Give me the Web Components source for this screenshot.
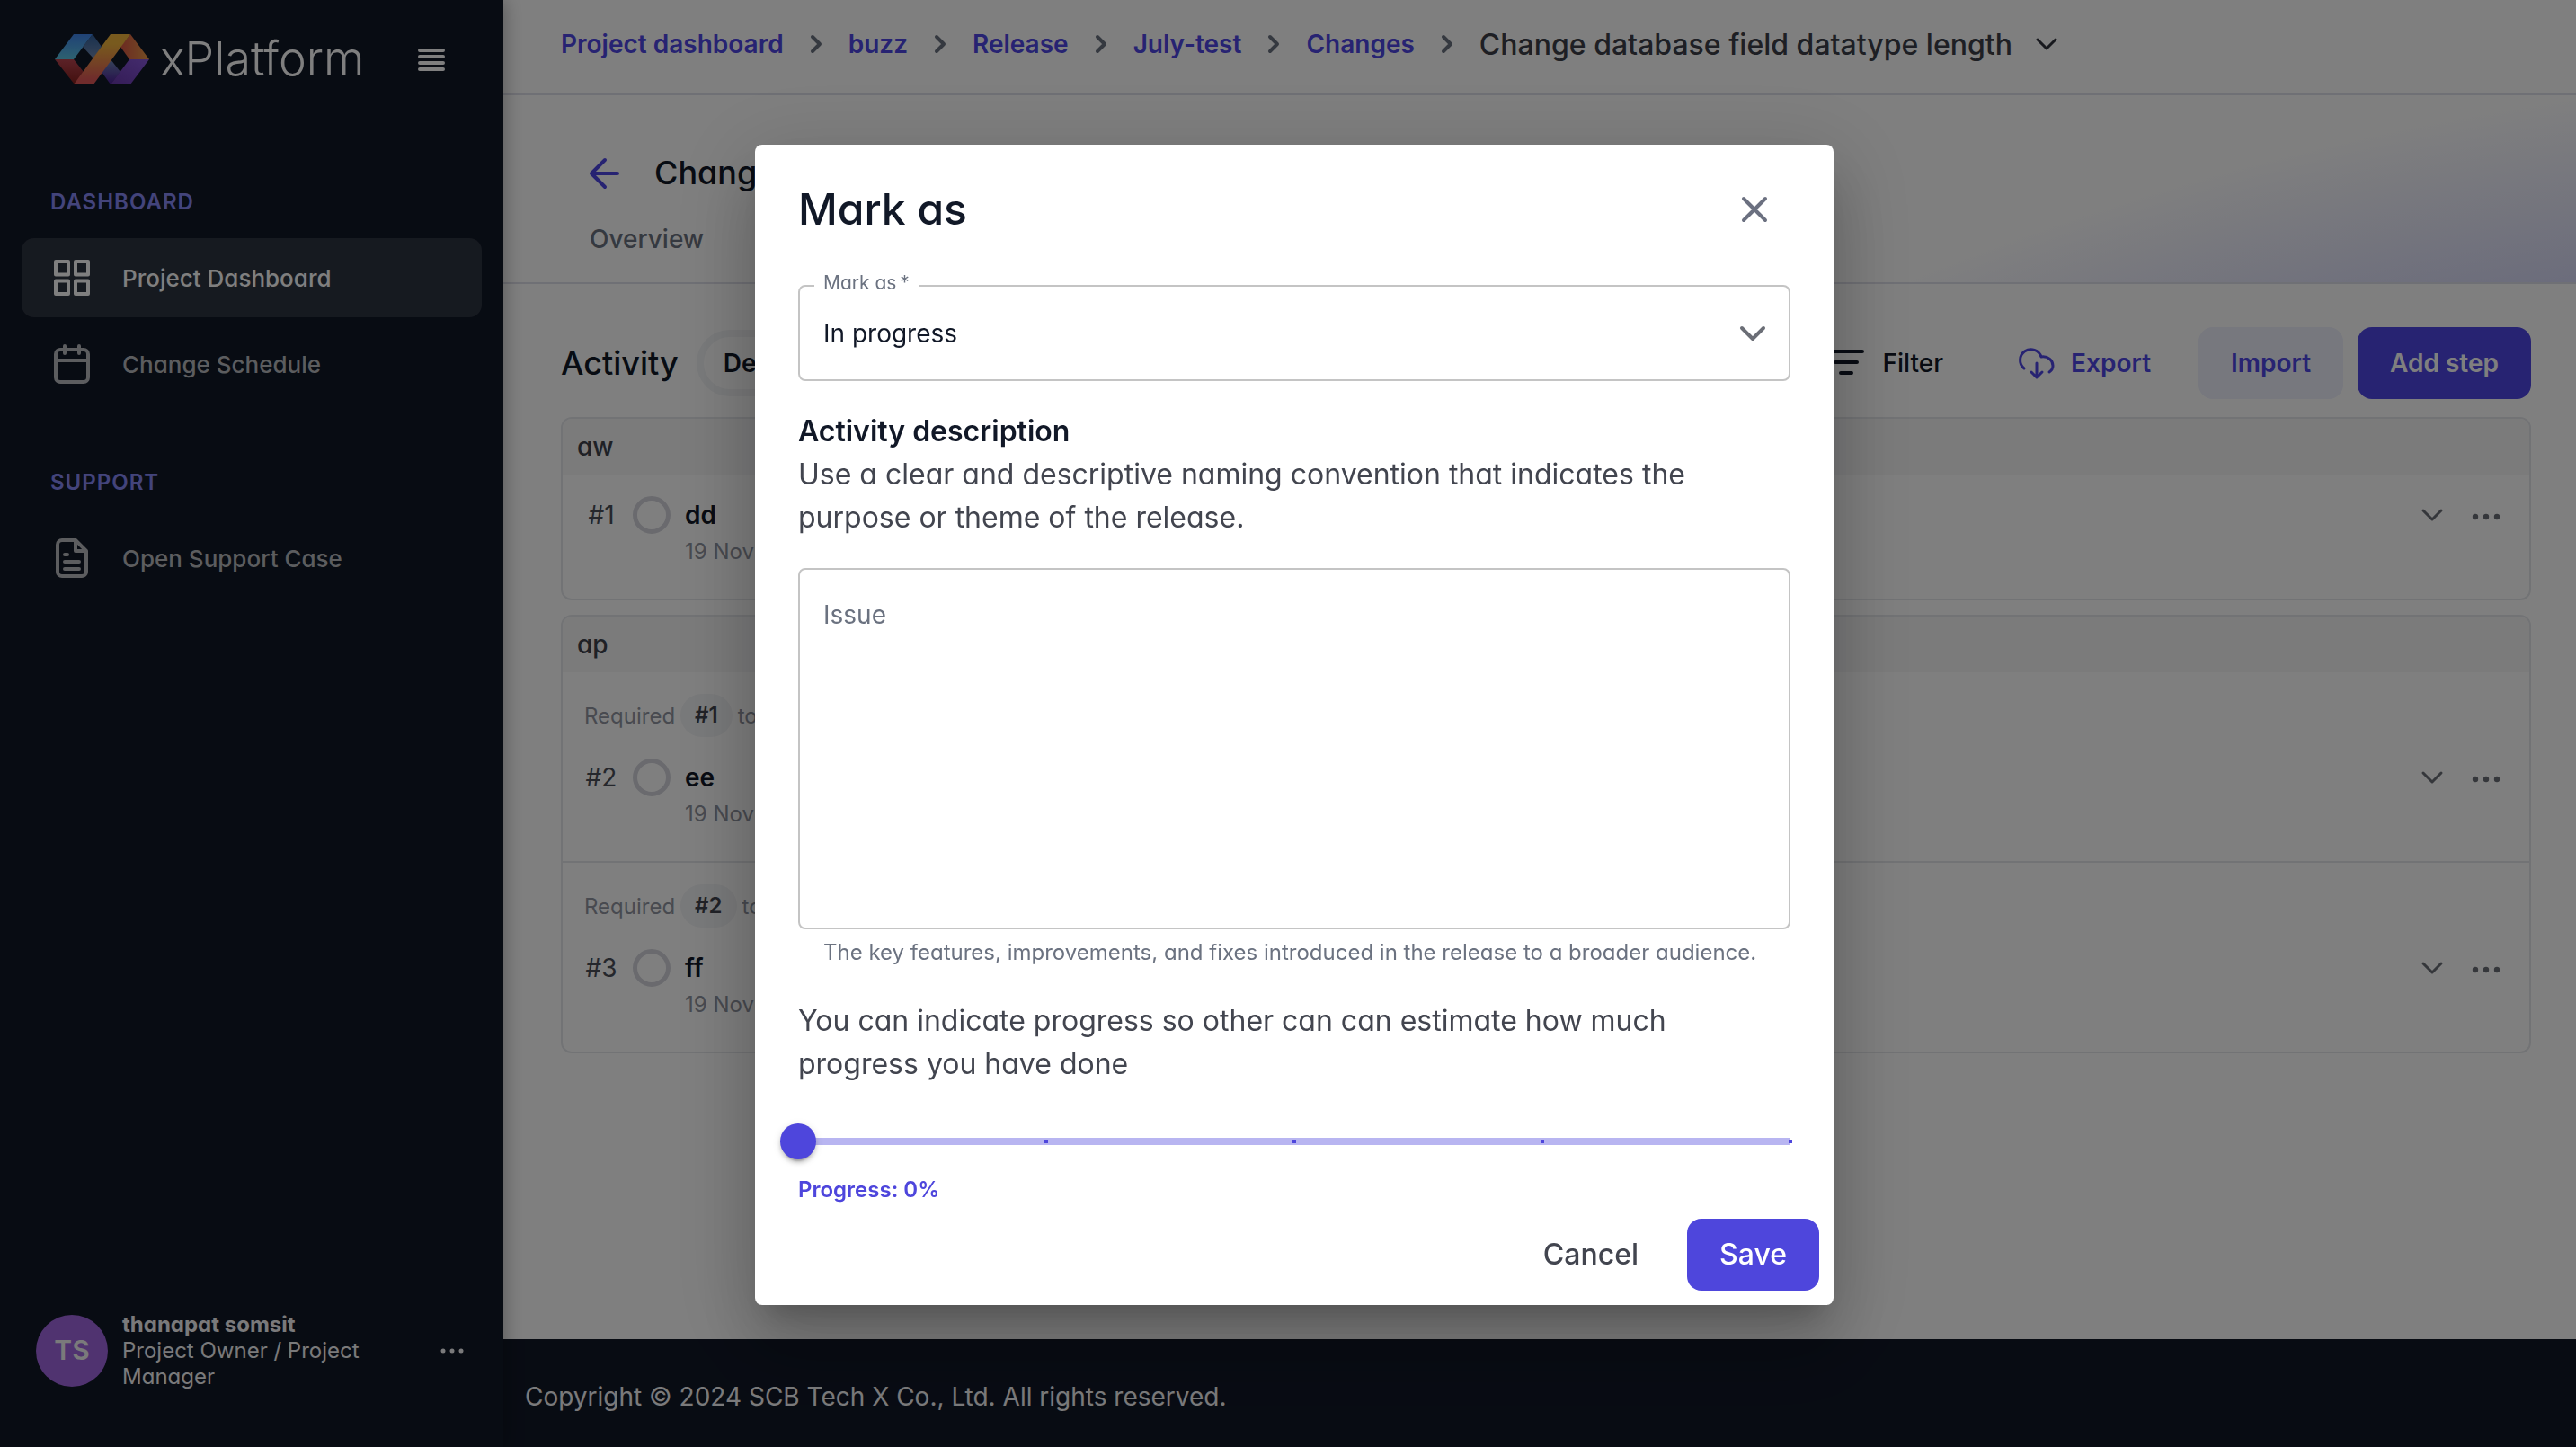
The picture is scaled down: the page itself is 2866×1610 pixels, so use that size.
<!DOCTYPE html>
<html lang="en">
<head>
<meta charset="utf-8">
<title>xPlatform</title>
<style>
  body { margin: 0; font-family: Inter, "Liberation Sans", sans-serif; color: #111827; background: #fff; }
</style>
</head>
<body>
<x-app></x-app>
<x-modal></x-modal>
<script>
const define = (name, html, setup) => customElements.define(name, class extends HTMLElement {
  connectedCallback() {
    if (this.shadowRoot) return;
    const t = document.createElement('template');
    t.innerHTML = '<style>*{box-sizing:border-box}button,input,select,textarea{font:inherit;font-feature-settings:inherit;color:inherit}button{display:flex;align-items:center;border:0;background:none;padding:0;cursor:pointer}a{color:inherit;text-decoration:none}h1,h2,h3,p{margin:0;font-weight:inherit;font-size:inherit}</style>' + (typeof html === 'function' ? html(this) : html);
    this.attachShadow({ mode: 'open' }).append(t.content.cloneNode(true));
    if (setup) setup(this, this.shadowRoot);
  }
});

const ICONS = {
  menu: [30, 26, '<g stroke-width="4"><path d="M2 3h26M2 10h26M2 17h26M2 24h26"/></g>'],
  grid: [40, 40, '<g stroke-width="4"><rect x="2" y="2" width="14" height="14.5"/><rect x="24" y="2" width="14" height="14.5"/><rect x="2" y="23.5" width="14" height="14.5"/><rect x="24" y="23.5" width="14" height="14.5"/></g>'],
  calendar: [40, 44, '<g stroke-width="4"><rect x="2" y="6" width="36" height="36" rx="5"/><path d="M2 18h36M12 2v8M28 2v8"/></g>'],
  doc: [40, 44, '<g stroke-width="4"><path d="M24 2H9a5 5 0 0 0-5 5v30a5 5 0 0 0 5 5h22a5 5 0 0 0 5-5V14L24 2v12h12M12 18h3M12 26h16M12 34h16"/></g>'],
  dots: [26, 6, '<g fill="currentColor" stroke="none"><circle cx="3" cy="3" r="2.5"/><circle cx="13" cy="3" r="2.5"/><circle cx="23" cy="3" r="2.5"/></g>'],
  more: [32, 12, '<g fill="currentColor" stroke="none"><circle cx="4" cy="8" r="3.2"/><circle cx="16" cy="8" r="3.2"/><circle cx="28" cy="8" r="3.2"/></g>'],
  sep: [12, 20, '<path stroke-width="4" d="M2 2l8 8-8 8"/>'],
  down: [24, 14, '<path stroke-width="3" d="M2 2l10 10L22 2"/>'],
  select: [28, 16, '<path stroke-width="4" d="M2 2l12 12L26 2"/>'],
  back: [34, 34, '<path stroke-width="4" d="M17 3L2 18l15 15M2 18h29"/>'],
  close: [28, 28, '<path stroke-width="4" d="M2 2l24 24M26 2L2 26"/>'],
  filter: [40, 30, '<path stroke-width="4" d="M2 2h36M8 14h24M14 26h12"/>'],
  cloud: [40, 36, '<g stroke-width="3"><path d="M6 24A12 12 0 1 1 25 11c8-1 13 4 13 10 0 3-1 5-4 7M20 18v15M14 28l6 6 6-6"/></g>']
};
define('x-icon', el => {
  const [w, h, body] = ICONS[el.getAttribute('name')];
  return `<style>:host{display:inline-flex;flex:none}svg{display:block;overflow:visible}</style>
  <svg width="${w}" height="${h}" viewBox="0 0 ${w} ${h}" fill="none" stroke="currentColor" stroke-linecap="round" stroke-linejoin="round" aria-hidden="true">${body}</svg>`;
});

define('x-logo', `
<style>
  :host { display: flex; align-items: center; gap: 12px; font-family: Inter, sans-serif; font-weight: 300; font-size: 52px; line-height: 56px; color: #fff; }
  svg { display: block; }
</style>
<svg width="105" height="56" viewBox="0 0 105 56" aria-hidden="true">
  <defs>
    <linearGradient id="a" x1="0" y1="0" x2="0" y2="1"><stop stop-color="#4084ec"/><stop offset="1" stop-color="#5cc4e0"/></linearGradient>
    <linearGradient id="b" x1="0" y1="0" x2="0" y2="1"><stop stop-color="#30609c"/><stop offset="1" stop-color="#7088b0"/></linearGradient>
    <linearGradient id="c" x1="0" y1="0" x2="0" y2="1"><stop stop-color="#b84450"/><stop offset="1" stop-color="#84201c"/></linearGradient>
    <linearGradient id="d" x1="0" y1="0" x2="0" y2="1"><stop offset=".2" stop-color="#f0b43c"/><stop offset=".9" stop-color="#e05858"/></linearGradient>
    <linearGradient id="e"><stop stop-color="#d85444"/><stop offset="1" stop-color="#e89c48"/></linearGradient>
    <linearGradient id="f" x1="1" y1="0" x2="0" y2="1"><stop stop-color="#8858dc"/><stop offset="1" stop-color="#6838ac"/></linearGradient>
    <linearGradient id="g" x1="0" y1="0" x2="0" y2="1"><stop stop-color="#6c88b4"/><stop offset="1" stop-color="#4c1c98"/></linearGradient>
  </defs>
  <path fill="url(#a)" d="M21 0h21L21 28H0z"/>
  <path fill="url(#b)" d="M42 0l10 14-9 13-12-13z"/>
  <path fill="url(#c)" d="M0 28h21l11 14-10 14z"/>
  <path fill="url(#e)" d="M84 0l21 28H83L73 14z"/>
  <path fill="url(#g)" d="M62 28l11 14-11 14-10-14z"/>
  <path fill="url(#f)" d="M83 28h22L84 56H62z"/>
  <path fill="url(#d)" d="M62 0h22L43 56H21z"/>
</svg>
<span>xPlatform</span>`);

define('x-nav-item', el => `
<style>
  :host { display: block; }
  a { display: flex; align-items: center; gap: 36px; height: 88px; padding: 0 36px; border-radius: 14px; color: #b8babe; font-size: 26px; font-weight: 500; }
  :host([active]) a { background: rgba(255,255,255,.12); color: #fff; }
</style>
<a href="#"><x-icon name="${el.getAttribute('icon')}"></x-icon><slot></slot></a>`);

define('x-nav-group', el => `
<style>
  :host { display: flex; flex-direction: column; gap: 8px; }
  h2 { padding: 0 32px; line-height: 32px; font-size: 24px; font-weight: 600; letter-spacing: 1px; color: #8688f6; margin-bottom: 16px; }
</style>
<h2>${el.getAttribute('label')}</h2><slot></slot>`);

define('x-sidebar', `
<style>
  :host { display: flex; flex-direction: column; background: #111827; color: #fff; padding: 38px 24px 64px; font-feature-settings: "cv11"; box-shadow: 0 0 20px rgba(0,0,0,.35); z-index: 1; }
  header { display: flex; align-items: center; justify-content: space-between; padding: 0 41px 0 37px; height: 56px; }
  nav { display: flex; flex-direction: column; gap: 72px; padding-top: 115px; flex: 1; }
  footer { display: flex; align-items: center; gap: 16px; padding: 0 20px 0 16px; font-size: 24px; line-height: 29px; }
  .avatar { flex: none; display: grid; place-items: center; width: 80px; height: 80px; border-radius: 50%; background: #a066e0; font-size: 30px; font-weight: 600; }
  .who { flex: 1; padding-right: 30px; }
  .who b { font-weight: 700; display: block; }
  footer { color: #f4f4f6; }
  .logo { font-feature-settings: normal; }
</style>
<header><x-logo class="logo"></x-logo><button aria-label="Menu"><x-icon name="menu"></x-icon></button></header>
<nav>
  <x-nav-group label="DASHBOARD"><x-nav-item icon="grid" active>Project Dashboard</x-nav-item><x-nav-item icon="calendar">Change Schedule</x-nav-item></x-nav-group>
  <x-nav-group label="SUPPORT"><x-nav-item icon="doc">Open Support Case</x-nav-item></x-nav-group>
</nav>
<footer><span class="avatar">TS</span><div class="who"><b>thanapat somsit</b>Project Owner / Project Manager</div><button aria-label="Account"><x-icon name="dots"></x-icon></button></footer>`);

define('x-breadcrumbs', `
<style>
  :host { display: block; height: 106px; border-bottom: 2px solid #dfe0ea; }
  nav { display: flex; align-items: center; gap: 30px; height: 98px; padding: 0 64px; font-size: 28px; font-weight: 600; color: #4f46e5; }
  x-icon { color: #6b7280; }
  button { gap: 26px; color: #3c3e48; font-size: 32px; font-weight: 500; }
  button x-icon { color: #30333c; }
</style>
<nav aria-label="Breadcrumb">
  <a href="#">Project dashboard</a><x-icon name="sep"></x-icon>
  <a href="#">buzz</a><x-icon name="sep"></x-icon>
  <a href="#">Release</a><x-icon name="sep"></x-icon>
  <a href="#">July-test</a><x-icon name="sep"></x-icon>
  <a href="#">Changes</a><x-icon name="sep"></x-icon>
  <button>Change database field datatype length<x-icon name="down"></x-icon></button>
</nav>`);

define('x-page-header', `
<style>
  :host { display: block; height: 210px; padding: 60px 96px 0; border-bottom: 2px solid #dfe0ea; font-feature-settings: "cv11";
    background: radial-gradient(circle at calc(100% + 434px) 3069px, #d8daf8 2894px, #fff 3100px); }
  .title { display: flex; align-items: center; gap: 38px; height: 52px; font-size: 36px; font-weight: 500; }
  .title a { color: #4f46e5; display: flex; }
  .tabs { display: flex; height: 96px; align-items: center; font-size: 28px; font-weight: 500; color: #6b7280; }
</style>
<div class="title"><a href="#" aria-label="Back"><x-icon name="back"></x-icon></a><h1>Change</h1></div>
<nav class="tabs"><a href="#">Overview</a></nav>`);

define('x-toolbar', `
<style>
  :host { display: flex; align-items: center; gap: 20px; height: 80px; font-size: 28px; font-weight: 600; }
  h2 { font-size: 36px; font-weight: 500; }
  .pill { height: 74px; padding: 0 22px; border: 8px solid #f3f4f6; border-radius: 37px; }
  .actions { display: flex; align-items: center; margin-left: auto; height: 80px; }
  button { gap: 18px; }
  .filter { font-weight: 500; gap: 21px; margin-right: 84px; }
  .export { color: #4f46e5; margin-right: 53px; }
  .import { color: #4f46e5; background: #eef0fd; }
  .import, .add { height: 80px; padding: 0 36px; border-radius: 16px; }
  .add { color: #fff; background: #4f46e5; margin-left: 16px; }
</style>
<h2>Activity</h2><button class="pill">Default</button>
<div class="actions">
  <button class="filter"><x-icon name="filter"></x-icon>Filter</button>
  <button class="export"><x-icon name="cloud"></x-icon>Export</button>
  <button class="import">Import</button>
  <button class="add">Add step</button>
</div>`);

define('x-group', el => `
<style>
  :host { display: block; border: 2px solid #e5e7eb; border-radius: 12px; overflow: hidden; }
  h3 { height: 62px; line-height: 62px; padding: 0 16px; background: #f6f6f7; color: #3f424c; font-size: 28px; font-weight: 500; }
</style>
<h3>${el.getAttribute('label')}</h3><slot></slot>`);

define('x-step', el => `
<style>
  :host { display: block; padding: 24px 32px 32px 24px; }
  :host(:not(:first-of-type)) { border-top: 2px solid #e5e7eb; }
  .req { display: flex; align-items: center; gap: 6px; height: 48px; margin-bottom: 24px; color: #9094a0; font-size: 24px; }
  .req b { height: 48px; line-height: 48px; padding: 0 16px; border-radius: 24px; background: #f3f4f6; color: #42454f; font-weight: 600; }
  .row { display: grid; grid-template-columns: 38px 42px 1fr auto auto; align-items: center; column-gap: 16px; font-size: 28px; }
  .num { color: #4b4e58; text-align: center; }
  i { width: 42px; height: 42px; border: 5px solid #d4d5dc; border-radius: 50%; }
  .name { font-weight: 600; line-height: 42px; }
  .date { grid-column: 3; color: #9094a0; font-size: 24px; line-height: 40px; }
  button { color: #6b6e76; height: 42px; }
  .exp { margin-right: 16px; }
</style>
${el.hasAttribute('requires') ? `<div class="req">Required <b>${el.getAttribute('requires')}</b> to</div>` : ''}
<div class="row"><span class="num">${el.getAttribute('num')}</span><i></i><span class="name"><slot></slot></span>
<button class="exp" aria-label="Expand"><x-icon name="down"></x-icon></button><button aria-label="More"><x-icon name="more"></x-icon></button>
<span class="date">19 Nov</span></div>`);

define('x-app', `
<style>
  :host { display: grid; grid-template-columns: 560px 1fr; min-height: 100vh; }
  .content { display: flex; flex-direction: column; min-width: 0; }
  main { flex: 1; display: flex; flex-direction: column; gap: 16px; padding: 48px 50px 48px 64px; }
  x-toolbar { margin-bottom: 4px; }
  x-group { font-feature-settings: "cv11"; }
  footer { height: 120px; padding: 8px 24px 0; display: flex; align-items: center; background: #111827; color: #f4f4f6; font-size: 28px; font-feature-settings: "cv11"; }
</style>
<x-sidebar></x-sidebar>
<div class="content">
  <x-breadcrumbs></x-breadcrumbs>
  <x-page-header></x-page-header>
  <main>
    <x-toolbar></x-toolbar>
    <x-group label="aw"><x-step num="#1">dd</x-step></x-group>
    <x-group label="ap"><x-step num="#2" requires="#1">ee</x-step><x-step num="#3" requires="#2">ff</x-step></x-group>
  </main>
  <footer>Copyright © 2024 SCB Tech X Co., Ltd. All rights reserved.</footer>
</div>`);

define('x-progress', `
<style>
  :host { display: block; }
  input { display: block; appearance: none; -webkit-appearance: none; width: calc(100% + 40px); height: 40px; margin: 0 -20px 16px; background: none; }
  input::-webkit-slider-runnable-track { height: 8px; background:
    linear-gradient(#4e46dc,#4e46dc) calc(25% + 9px) 2px / 4px 4px no-repeat,
    linear-gradient(#4e46dc,#4e46dc) 50% 2px / 4px 4px no-repeat,
    linear-gradient(#4e46dc,#4e46dc) calc(75% - 9px) 2px / 4px 4px no-repeat,
    linear-gradient(#4e46dc,#4e46dc) calc(100% - 18px) 2px / 4px 4px no-repeat,
    linear-gradient(#b8b5f1,#b8b5f1) 50% 0 / calc(100% - 40px) 8px no-repeat; }
  input::-webkit-slider-thumb { -webkit-appearance: none; width: 40px; height: 40px; margin-top: -16px; border-radius: 50%; background: #4e46dc; box-shadow: 0 6px 2px -4px rgba(0,0,0,.2), 0 4px 4px rgba(0,0,0,.14), 0 2px 10px rgba(0,0,0,.12); }
  label { display: block; font-size: 24px; line-height: 36px; font-weight: 600; color: #4e46dc; }
</style>
<input id="p" type="range" min="0" max="100" step="25" value="0">
<label for="p">Progress: 0%</label>`, (el, root) => {
  root.querySelector('input').addEventListener('input', e => root.querySelector('label').textContent = `Progress: ${e.target.value}%`);
});

define('x-modal', `
<style>
  :host { position: fixed; inset: 0; z-index: 10; display: grid; place-items: center; padding: 2px 0 0 14px; background: rgba(0,0,0,.5); box-sizing: border-box; }
  section { width: 1200px; background: #fff; border-radius: 8px; font-feature-settings: "cv11"; color: #111827;
    box-shadow: 0 22px 30px -14px rgba(0,0,0,.2), 0 48px 76px 6px rgba(0,0,0,.14), 0 18px 92px 16px rgba(0,0,0,.12); }
  header { display: flex; align-items: center; justify-content: space-between; padding: 32px 74px 28px 48px; }
  h2 { font-size: 48px; line-height: 80px; font-weight: 500; }
  .close { color: #6b7080; }
  .body { padding: 0 48px; font-size: 32px; line-height: 48px; color: #42454f; }
  fieldset { display: grid; margin: 0 0 32px; padding: 0 0 15px; border: 2px solid #c4c4c4; border-radius: 8px; min-width: 0; color: #111827; }
  legend { margin-left: 16px; padding: 0 10px 6px; font-size: 21px; line-height: 28px; color: #6b7280; }
  select { grid-area: 1/1; appearance: none; border: 0; background: none; height: 72px; padding: 0 26px; font-size: 28px; outline: 0; }
  fieldset x-icon { grid-area: 1/1; justify-self: end; align-self: center; margin-right: 26px; color: #6b6e76; pointer-events: none; }
  h3 { font-weight: 600; color: #111827; }
  textarea { display: block; width: 100%; height: 402px; margin-top: 32px; padding: 28px 26px; border: 2px solid #c4c4c4; border-radius: 8px; font-size: 28px; line-height: 44px; resize: none; background: none; }
  textarea::placeholder { color: #6b7280; opacity: 1; }
  small { display: block; margin: 6px 28px 32px; font-size: 24px; line-height: 40px; color: #6b7280; }
  x-progress { margin-top: 42px; }
  footer { display: flex; justify-content: flex-end; padding: 14px 16px 16px; font-size: 32px; font-weight: 500; font-feature-settings: normal; }
  footer button { height: 80px; padding: 0 36px; border-radius: 16px; color: #42454f; }
  footer .save { margin-left: 18px; background: #4e46dc; color: #fff; }
</style>
<section role="dialog" aria-labelledby="t">
  <header><h2 id="t">Mark as</h2><button class="close" aria-label="Close"><x-icon name="close"></x-icon></button></header>
  <div class="body">
    <fieldset><legend><label for="s">Mark as&thinsp;*</label></legend><select id="s"><option>In progress</option></select><x-icon name="select"></x-icon></fieldset>
    <h3><label for="d">Activity description</label></h3>
    <p>Use a clear and descriptive naming convention that indicates the purpose or theme of the release.</p>
    <textarea id="d" placeholder="Issue"></textarea>
    <small>The key features, improvements, and fixes introduced in the release to a broader audience.</small>
    <p>You can indicate progress so other can can estimate how much progress you have done</p>
    <x-progress></x-progress>
  </div>
  <footer><button>Cancel</button><button class="save">Save</button></footer>
</section>`);
</script>
</body>
</html>
